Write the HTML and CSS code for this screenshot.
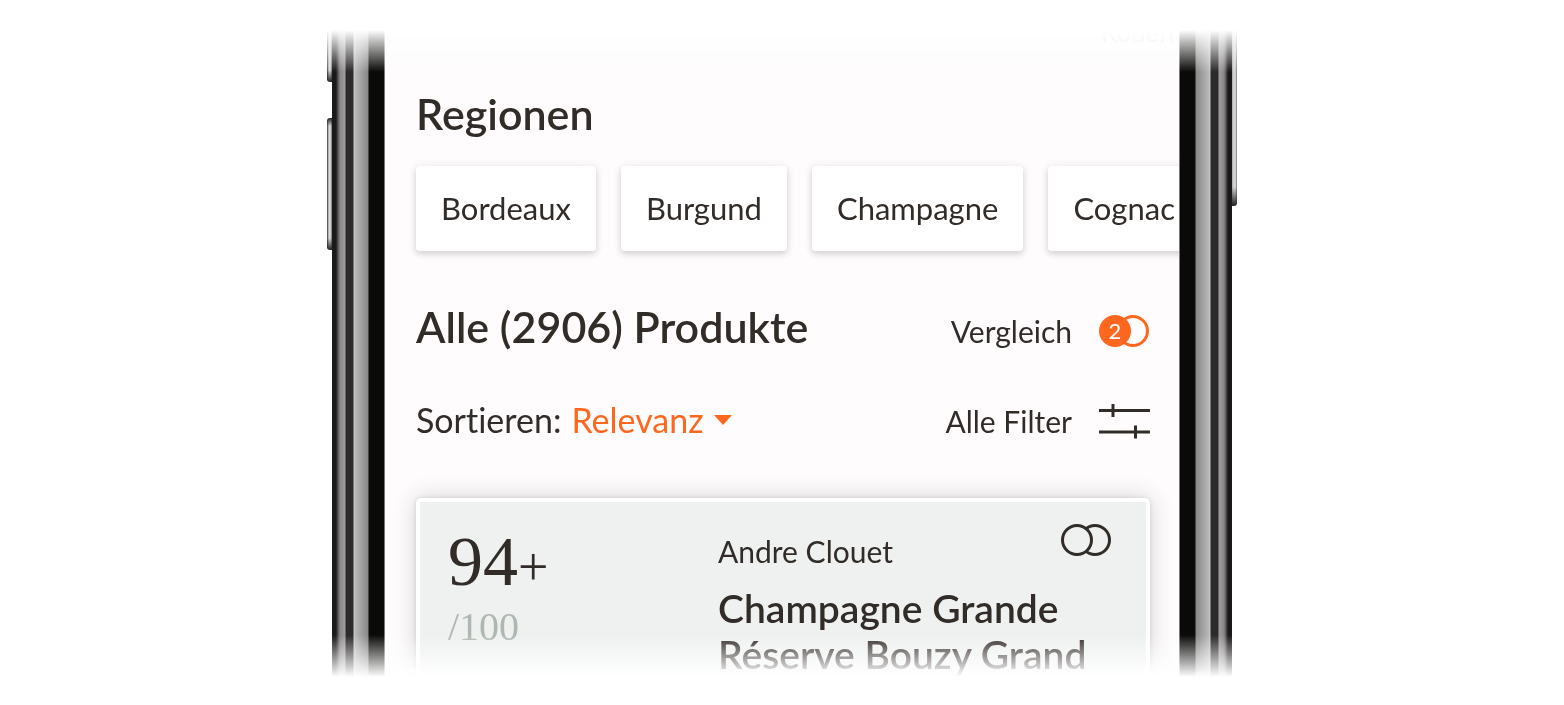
FILE: index.html
```
<!DOCTYPE html>
<html lang="de">
<head>
  <meta charset="utf-8">
  <title>Produkte</title>
  <link rel="stylesheet" href="styles.css">
</head>
<body>
  <div class="phone">
    <div class="keys keys-left">
      <span class="key key-mute"></span>
      <span class="key key-volume"></span>
    </div>
    <div class="rail"></div>

    <main class="screen">
      <a class="more" href="#">Rouen</a>

      <h2 class="title">Regionen</h2>
      <nav class="regions">
        <a class="region" href="#">Bordeaux</a>
        <a class="region" href="#">Burgund</a>
        <a class="region" href="#">Champagne</a>
        <a class="region" href="#">Cognac</a>
      </nav>

      <div class="row">
        <h2 class="title">Alle (2906) Produkte</h2>
        <button class="action" type="button">
          Vergleich
          <svg class="icon" width="52" height="36" viewBox="0 0 52 36">
            <circle cx="35" cy="18" r="14.500" fill="none" stroke="#ff671f" stroke-width="3"/>
            <circle cx="17" cy="18" r="16" fill="#ff671f"/>
            <text class="count" x="17" y="26" text-anchor="middle">2</text>
          </svg>
        </button>
      </div>

      <div class="row row-sort">
        <div class="sort">
          <label for="sortieren">Sortieren:</label>
          <select id="sortieren" class="sort-select">
            <option>Relevanz</option>
          </select>
          <svg class="caret" width="18" height="10" viewBox="0 0 18 10"><path d="M0 0h18L9 10z" fill="#ff671f"/></svg>
        </div>
        <button class="action" type="button">
          Alle Filter
          <svg class="icon" width="52" height="36" viewBox="0 0 52 36">
            <path d="M1 7.500h51M15 1v13M1 29h51M37.500 22.500v13" fill="none" stroke="#322c29" stroke-width="3"/>
          </svg>
        </button>
      </div>

      <article class="card">
        <div class="rating">
          <div class="points">94<span class="plus">+</span></div>
          <div class="scale">/100</div>
        </div>
        <div class="info">
          <div class="info-top">
            <span class="producer">Andre Clouet</span>
            <button class="compare" type="button" aria-label="Vergleichen">
              <svg width="52" height="34" viewBox="0 0 52 34">
                <g fill="#eef1f0" stroke="#322c29" stroke-width="3">
                  <circle cx="35" cy="17" r="14.500"/>
                  <circle cx="17" cy="17" r="14.500"/>
                </g>
              </svg>
            </button>
          </div>
          <h3 class="name">Champagne Grande Réserve Bouzy Grand</h3>
        </div>
      </article>
    </main>

    <div class="rail rail-right"></div>
    <div class="keys keys-right">
      <span class="key key-power"></span>
    </div>
  </div>
</body>
</html>
```
FILE: styles.css
```
* {
  box-sizing: border-box;
}

body {
  margin: 0;
  padding: 16px 0;
  background: #fff;
  color: #322c29;
  font-family: Lato, "Open Sans", sans-serif;
  font-variant-ligatures: none;
}

h2, h3 {
  margin: 0;
}

a {
  color: inherit;
  text-decoration: none;
}

button, select {
  margin: 0;
  padding: 0;
  border: none;
  background: none;
  color: inherit;
  font: inherit;
  cursor: pointer;
}

svg {
  display: block;
}

/* phone, faded out at the top and bottom */
.phone {
  display: flex;
  max-width: 910px;
  margin: 0 auto;
  -webkit-mask-image: linear-gradient(transparent 14px, #000 56px, #000 calc(100% - 42px), transparent);
  mask-image: linear-gradient(transparent 14px, #000 56px, #000 calc(100% - 42px), transparent);
}

.keys {
  display: flex;
  flex-direction: column;
  flex: none;
  width: 5px;
  gap: 36px;
}

.key {
  background: linear-gradient(#222, transparent 8px, transparent calc(100% - 12px), #222), linear-gradient(90deg, #333, #ddd 40%, #c8c8c8 80%, #555);
  border-radius: 3px 0 0 3px;
}

.key-mute {
  height: 66px;
}

.key-volume {
  height: 132px;
}

.key-power {
  height: 190px;
  background: linear-gradient(transparent 90%, #222), linear-gradient(90deg, #aaa, #ddd6d8 40%, #ccc 70%, #777);
  border-radius: 0 3px 3px 0;
}

.rail {
  flex: none;
  width: 53px;
  background: linear-gradient(90deg,
    #1b1a18 0, #1b1a18 4px, #555 6px, #8a878a 8px, #a09da0 13px,
    #2c2b29 14px, #2c2b29 21px, #c4c4c4 22px, #b5b5b5 24px, #888 36px,
    #0a0a08 37px, #0a0a08 52px, #777 52px);
}

.rail-right {
  transform: scaleX(-1);
}

.screen {
  flex: 1;
  min-width: 0;
  overflow: hidden;
  padding: 0 29px 0 31px;
  background: #fefcfd;
}

.more {
  display: block;
  height: 72px;
  margin-right: -24px;
  font-size: 26px;
  line-height: 32px;
  text-align: right;
  color: #e4e2e3;
}

.title {
  font-size: 43px;
  line-height: 52px;
  font-weight: 600;
}

.regions {
  display: flex;
  gap: 25px;
  margin: 26px -29px 50px 0;
}

.region {
  flex: none;
  padding: 25px;
  border-radius: 4px;
  background: #fff;
  box-shadow: 0 3px 6px rgba(50, 44, 41, 0.18), 0 0 12px rgba(50, 44, 41, 0.06);
  font-size: 31px;
  line-height: 35px;
}

.row {
  display: flex;
  align-items: baseline;
  justify-content: space-between;
}

.row-sort {
  margin: 45px 0 56px;
}

.action {
  display: flex;
  align-items: center;
  gap: 26px;
  font-size: 30px;
  line-height: 36px;
}

.count {
  fill: #fff;
  font-size: 22px;
}

.sort {
  display: flex;
  align-items: center;
  gap: 10px;
  font-size: 34px;
  line-height: 44px;
}

.sort-select {
  appearance: none;
  color: #ff671f;
}

.card {
  display: grid;
  grid-template-columns: 270px 1fr;
  padding: 21px 34px 0 28px;
  border: 4px solid #fff;
  border-bottom: none;
  border-radius: 5px 5px 0 0;
  background: #eef1f0;
  box-shadow: 0 0 24px rgba(50, 44, 41, 0.2), 0 0 4px rgba(50, 44, 41, 0.15);
}

.points {
  font-family: "Liberation Serif", serif;
  font-size: 70px;
  line-height: 78px;
}

.plus {
  font-size: 54px;
}

.scale {
  color: #aeb8b1;
  font-family: "Liberation Serif", serif;
  font-size: 40px;
  line-height: 42px;
}

.info-top {
  display: flex;
  align-items: flex-start;
  justify-content: space-between;
}

.producer {
  padding-top: 10px;
  font-size: 30px;
  line-height: 36px;
}

.name {
  margin-top: 16px;
  font-size: 39px;
  line-height: 46px;
  font-weight: 600;
}
```
